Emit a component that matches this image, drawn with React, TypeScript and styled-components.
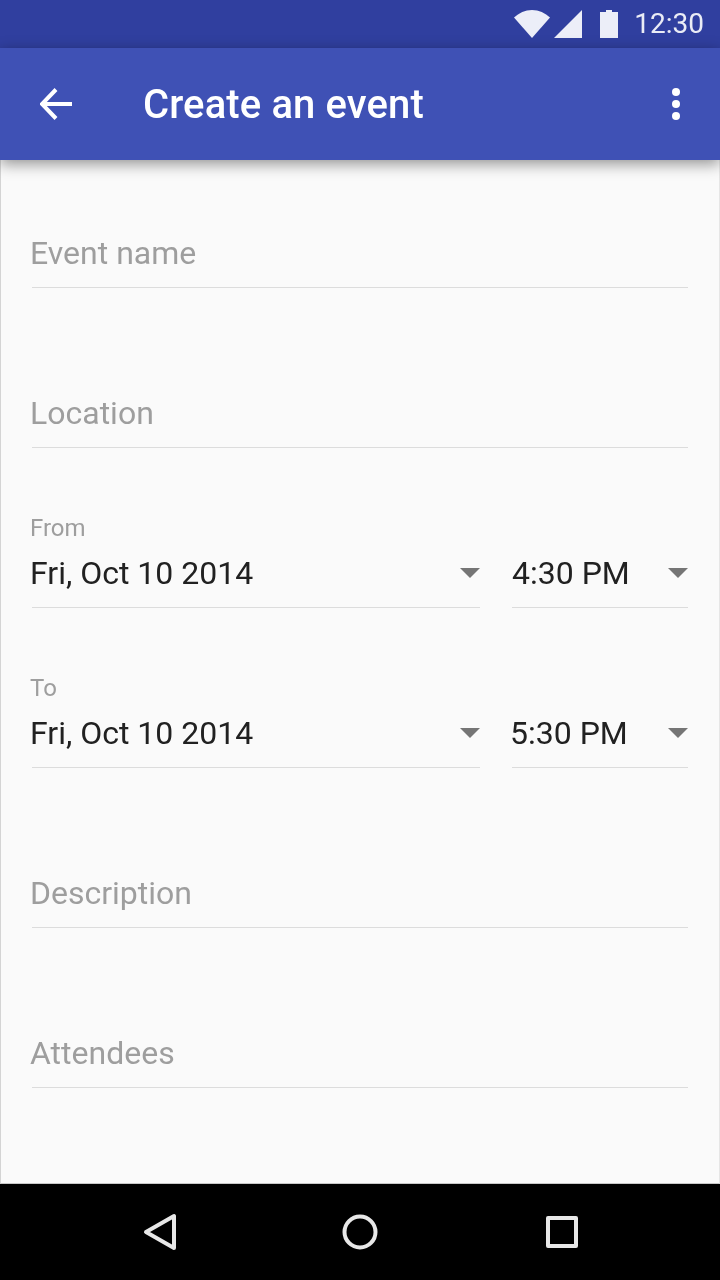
import styled, { createGlobalStyle } from "styled-components"

const GlobalStyle = createGlobalStyle`
    html, body {
        margin: 0;
        padding: 0;
        background: #fafafa;
    }
    body {
        font-family: Roboto, "Liberation Sans", sans-serif;
    }
`

const Screen = styled.div`
    display: flex;
    flex-direction: column;
    width: 720px;
    height: 1280px;
    overflow: hidden;
    will-change: transform;
`

const StatusBar = styled.div`
    display: flex;
    align-items: center;
    justify-content: flex-end;
    height: 48px;
    padding-right: 16px;
    background-color: #303f9f;
    color: rgba(255, 255, 255, 0.9);
    flex: none;
`

const StatusIcon = styled.svg<{ $gap?: number }>`
    display: block;
    flex: none;
    margin-left: ${(props) => props.$gap ?? 0}px;
`

const Clock = styled.span`
    margin-left: 16px;
    font-size: 28px;
    line-height: 48px;
`

const Toolbar = styled.div`
    position: relative;
    z-index: 1;
    display: flex;
    align-items: center;
    height: 112px;
    flex: none;
    background-color: #3f51b5;
    box-shadow: 0 4px 14px rgba(0, 0, 0, 0.42);
`

const IconSlot = styled.div`
    display: flex;
    align-items: center;
    justify-content: center;
    width: 112px;
    height: 112px;
    flex: none;
`

const Title = styled.h1`
    flex: 1;
    margin: 0 0 0 31px;
    color: #ffffff;
    font-size: 40px;
    font-weight: 500;
    letter-spacing: 0.12px;
`

const Dots = styled.div`
    display: flex;
    flex-direction: column;
    gap: 4px;
    margin-right: 40px;
`

const Dot = styled.span`
    width: 8px;
    height: 8px;
    border-radius: 50%;
    background-color: #ffffff;
`

const Form = styled.div`
    flex: 1;
    display: flex;
    flex-direction: column;
    gap: 32px;
    padding: 0 31px 0 31px;
    background-color: #fafafa;
    border-left: 1px solid #d4d4d4;
    border-right: 1px solid #e6e6e6;
    border-bottom: 1px solid #c8c8c8;
    box-sizing: border-box;
`

const Row = styled.div`
    display: flex;
    gap: 32px;
`

const Field = styled.div<{ $width?: number }>`
    display: flex;
    flex-direction: column;
    justify-content: flex-end;
    flex: none;
    height: 128px;
    box-sizing: border-box;
    border-bottom: 1px solid #dcdcdc;
    ${(props) => props.$width && `width: ${props.$width}px;`}
`

const Label = styled.span`
    margin-left: -2px;
    color: #9e9e9e;
    font-size: 24px;
    line-height: 32px;
`

const Line = styled.div`
    display: flex;
    align-items: center;
    justify-content: space-between;
    height: 63px;
    padding-bottom: 5px;
    box-sizing: border-box;
`

const Placeholder = styled.span`
    margin-left: -2px;
    color: #9e9e9e;
    font-size: 32px;
`

const Value = styled.span<{ $shift?: number }>`
    margin-left: ${(props) => props.$shift ?? -2}px;
    color: #212121;
    font-size: 32px;
`

const Caret = styled.span`
    width: 0;
    height: 0;
    border-left: 10px solid transparent;
    border-right: 10px solid transparent;
    border-top: 10px solid #757575;
`

const NavBar = styled.div`
    display: flex;
    align-items: center;
    gap: 164px;
    height: 96px;
    padding-left: 142px;
    flex: none;
    background-color: #000000;
`

const NavIcon = styled.svg`
    display: block;
    fill: none;
    stroke: #e8e8e8;
    stroke-width: 4;
    stroke-linejoin: round;
`

const NavSquare = styled(NavIcon)`
    margin-left: 4px;
`

const TextField = ({ hint }: { hint: string }) => (
    <Field>
        <Line>
            <Placeholder>{hint}</Placeholder>
        </Line>
    </Field>
)

interface DateRowProps {
    label: string
    date: string
    time: string
    timeShift: number
}

const DateRow = ({ label, date, time, timeShift }: DateRowProps) => (
    <Row>
        <Field $width={448}>
            <Label>{label}</Label>
            <Line>
                <Value>{date}</Value>
                <Caret />
            </Line>
        </Field>
        <Field $width={176}>
            <Line>
                <Value $shift={timeShift}>{time}</Value>
                <Caret />
            </Line>
        </Field>
    </Row>
)

const App = () => {
    return (
        <Screen>
            <GlobalStyle />
            <StatusBar>
                <StatusIcon width="36" height="28" viewBox="0 0 36 28">
                    <path d="M0 7.5C5 3 11 0 18 0s13 3 18 7.5L18 28z" fill="#eceef8" />
                </StatusIcon>
                <StatusIcon $gap={4} width="28" height="28" viewBox="0 0 28 28">
                    <path d="M28 0v28H0z" fill="#eceef8" />
                </StatusIcon>
                <StatusIcon $gap={18} width="18" height="28" viewBox="0 0 18 28">
                    <path d="M0 2h6V0h6v2h6v26H0z" fill="#eceef8" />
                </StatusIcon>
                <Clock>12:30</Clock>
            </StatusBar>
            <Toolbar>
                <IconSlot>
                    <svg width="32" height="32" viewBox="0 0 32 32" fill="none" stroke="#ffffff" strokeWidth="4">
                        <path d="M16 1.5 2 16l14 14.5M2 16h30" />
                    </svg>
                </IconSlot>
                <Title>Create an event</Title>
                <Dots>
                    <Dot />
                    <Dot />
                    <Dot />
                </Dots>
            </Toolbar>
            <Form>
                <TextField hint="Event name" />
                <TextField hint="Location" />
                <DateRow label="From" date="Fri, Oct 10 2014" time="4:30 PM" timeShift={0} />
                <DateRow label="To" date="Fri, Oct 10 2014" time="5:30 PM" timeShift={-2} />
                <TextField hint="Description" />
                <TextField hint="Attendees" />
            </Form>
            <NavBar>
                <NavIcon width="36" height="40" viewBox="0 0 36 40">
                    <path d="M4 20 32 4v32z" />
                </NavIcon>
                <NavIcon width="36" height="36" viewBox="0 0 36 36">
                    <circle cx="18" cy="18" r="15.5" />
                </NavIcon>
                <NavSquare width="32" height="32" viewBox="0 0 32 32">
                    <rect x="2" y="2" width="28" height="28" />
                </NavSquare>
            </NavBar>
        </Screen>
    )
}

export default App
